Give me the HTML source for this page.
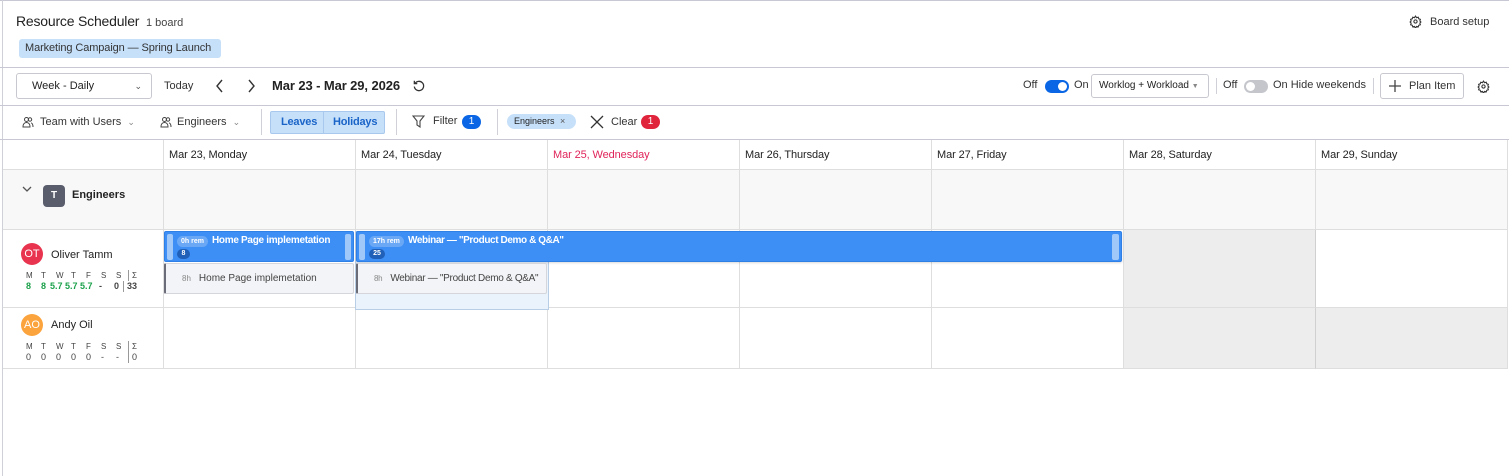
<!DOCTYPE html>
<html><head><meta charset="utf-8"><style>
*{box-sizing:border-box;margin:0;padding:0}
body{width:1509px;height:476px;overflow:hidden;background:#fff;font-family:"Liberation Sans",sans-serif;color:#222;font-size:12px;position:relative;white-space:nowrap}
.abs{position:absolute}
svg{display:block}
.cell{position:absolute;border-right:1px solid #dedede;border-bottom:1px solid #dedede}
.hd{font-size:11px;color:#222;padding:9px 0 0 5px;letter-spacing:-0.1px}
.sep{position:absolute;width:1px;background:#d0d0d8}
</style></head><body>
<div class="abs" style="left:0;top:0;width:1509px;height:1px;background:#c8c8d4"></div>
<div class="abs" style="left:2px;top:0;width:1px;height:476px;background:#d0d0d8"></div>
<div class="abs" style="left:16px;top:13px;font-size:14px;color:#222;letter-spacing:-0.2px">Resource Scheduler <span style="font-size:11px;color:#444;margin-left:3px;letter-spacing:0">1 board</span></div>
<div class="abs" style="left:19px;top:39px;height:19px;width:202px;background:#c6e0fa;border-radius:3px;font-size:11px;color:#333;line-height:19px;padding-left:6px;letter-spacing:-0.1px">Marketing Campaign — Spring Launch</div>
<div class="abs" style="left:1409px;top:15px;display:flex;align-items:center;font-size:11px;color:#333">
<svg width="13" height="13" viewBox="0 0 24 24" fill="none" stroke="#333" stroke-width="2"><circle cx="12" cy="12" r="3"/><path d="M12 2l2 3 3-1 1 3 3 1-1 3 2 2-2 2 1 3-3 1-1 3-3-1-2 3-2-3-3 1-1-3-3-1 1-3-2-2 2-2-1-3 3-1 1-3 3 1z"/></svg><span style="margin-left:8px">Board setup</span></div>
<div class="abs" style="left:0;top:67px;width:1509px;height:1px;background:#c8c8d4"></div>
<div class="abs" style="left:16px;top:73px;width:136px;height:26px;border:1px solid #c8c8d0;border-radius:3px;font-size:11px;line-height:24px;padding-left:15px">Week - Daily<span style="position:absolute;right:9px;top:0;font-size:9px;color:#555">⌄</span></div>
<div class="abs" style="left:164px;top:80px;font-size:11px;color:#333">Today</div>
<svg class="abs" style="left:215px;top:79px" width="10" height="14" viewBox="0 0 10 14"><path d="M7 1L2 7l5 6" fill="none" stroke="#333" stroke-width="1.4"/></svg>
<svg class="abs" style="left:246px;top:79px" width="10" height="14" viewBox="0 0 10 14"><path d="M3 1l5 6-5 6" fill="none" stroke="#333" stroke-width="1.4"/></svg>
<div class="abs" style="left:272px;top:78px;font-size:13px;font-weight:bold;color:#222;letter-spacing:-0.1px">Mar 23 - Mar 29, 2026</div>
<svg class="abs" style="left:412px;top:79px" width="14" height="14" viewBox="0 0 24 24" fill="none" stroke="#333" stroke-width="2.2"><path d="M5 8a8 8 0 1 1-1 5"/><path d="M4 3v5h5"/></svg>
<div class="abs" style="left:1023px;top:79px;font-size:11px;color:#333">Off</div>
<div class="abs" style="left:1045px;top:80px;width:24px;height:13px;border-radius:7px;background:#0a66e4"><div style="position:absolute;right:2px;top:2px;width:9px;height:9px;border-radius:50%;background:#fff"></div></div>
<div class="abs" style="left:1074px;top:79px;font-size:11px;color:#333">On</div>
<div class="abs" style="left:1091px;top:74px;width:118px;height:24px;border:1px solid #c8c8d0;border-radius:3px;font-size:10px;line-height:22px;padding-left:7px;color:#222">Worklog + Workload <span style="font-size:7px;color:#888">▼</span></div>
<div class="sep" style="left:1216px;top:78px;height:16px"></div>
<div class="abs" style="left:1223px;top:79px;font-size:11px;color:#333">Off</div>
<div class="abs" style="left:1244px;top:80px;width:24px;height:13px;border-radius:7px;background:#c4c6cc"><div style="position:absolute;left:2px;top:2px;width:9px;height:9px;border-radius:50%;background:#fff"></div></div>
<div class="abs" style="left:1273px;top:79px;font-size:11px;color:#333">On Hide weekends</div>
<div class="sep" style="left:1373px;top:78px;height:16px"></div>
<div class="abs" style="left:1380px;top:73px;width:84px;height:26px;border:1px solid #c8c8d0;border-radius:3px;font-size:11px;line-height:24px;padding-left:28px;color:#333">Plan Item<svg style="position:absolute;left:8px;top:6px" width="12" height="12" viewBox="0 0 12 12"><path d="M6 0v12M0 6h12" stroke="#444" stroke-width="1.3"/></svg></div>
<svg class="abs" style="left:1477px;top:80px" width="13" height="13" viewBox="0 0 24 24" fill="none" stroke="#333" stroke-width="2"><circle cx="12" cy="12" r="3"/><path d="M12 2l2 3 3-1 1 3 3 1-1 3 2 2-2 2 1 3-3 1-1 3-3-1-2 3-2-3-3 1-1-3-3-1 1-3-2-2 2-2-1-3 3-1 1-3 3 1z"/></svg>
<div class="abs" style="left:0;top:105px;width:1509px;height:1px;background:#c8c8d4"></div>
<svg class="abs" style="left:22px;top:116px" width="12" height="12" viewBox="0 0 12 12" fill="none" stroke="#444" stroke-width="1"><circle cx="4.5" cy="3.5" r="2"/><path d="M1 11c0-3 1.5-4.5 3.5-4.5S8 8 8 11z"/><circle cx="8" cy="3.5" r="1.7"/><path d="M9 6.8c1.3.4 2 1.8 2 4.2"/></svg>
<div class="abs" style="left:40px;top:116px;font-size:11px;color:#333">Team with Users <span style="color:#888;font-size:9px;margin-left:3px">⌄</span></div>
<svg class="abs" style="left:160px;top:116px" width="12" height="12" viewBox="0 0 12 12" fill="none" stroke="#444" stroke-width="1"><circle cx="4.5" cy="3.5" r="2"/><path d="M1 11c0-3 1.5-4.5 3.5-4.5S8 8 8 11z"/><circle cx="8" cy="3.5" r="1.7"/><path d="M9 6.8c1.3.4 2 1.8 2 4.2"/></svg>
<div class="abs" style="left:177px;top:116px;font-size:11px;color:#333">Engineers <span style="color:#888;font-size:9px;margin-left:3px">⌄</span></div>
<div class="sep" style="left:261px;top:109px;height:26px"></div>
<div class="abs" style="left:270px;top:111px;width:115px;height:23px;border:1px solid #a9c8ee;background:#c6e0fa;border-radius:2px;font-size:11px;font-weight:bold;color:#1a64c8;line-height:21px;letter-spacing:-0.2px"><span style="position:absolute;left:10px">Leaves</span><div style="position:absolute;left:52px;top:0;width:1px;height:21px;background:#a9c8ee"></div><span style="position:absolute;left:62px">Holidays</span></div>
<div class="sep" style="left:396px;top:109px;height:26px"></div>
<svg class="abs" style="left:412px;top:115px" width="13" height="13" viewBox="0 0 13 13"><path d="M1 1h11L8 6v6L5 10V6z" fill="none" stroke="#444" stroke-width="1.1"/></svg>
<div class="abs" style="left:433px;top:115px;font-size:11px;color:#333">Filter</div>
<div class="abs" style="left:462px;top:115px;width:19px;height:14px;border-radius:7px;background:#0a66e4;color:#fff;font-size:10px;text-align:center;line-height:14px">1</div>
<div class="sep" style="left:497px;top:109px;height:26px"></div>
<div class="abs" style="left:507px;top:114px;width:69px;height:15px;border-radius:8px;background:#c6e0fa;font-size:9px;color:#222;line-height:15px;padding-left:7px">Engineers <span style="margin-left:3px;color:#555">×</span></div>
<svg class="abs" style="left:590px;top:115px" width="14" height="14" viewBox="0 0 14 14"><path d="M1 1l12 12M13 1L1 13" stroke="#333" stroke-width="1.3"/></svg>
<div class="abs" style="left:611px;top:116px;font-size:11px;color:#333">Clear</div>
<div class="abs" style="left:641px;top:115px;width:19px;height:14px;border-radius:7px;background:#e0243c;color:#fff;font-size:10px;text-align:center;line-height:14px">1</div>
<div class="abs" style="left:0;top:139px;width:1509px;height:1px;background:#c8c8d4"></div>

<!-- grid -->
<div class="abs" style="left:3px;top:140px;width:1506px;height:229px">
 <div class="cell" style="left:0;top:0;width:161px;height:30px"></div>
 <div class="cell hd" style="left:161px;top:0;width:192px;height:30px">Mar 23, Monday</div>
 <div class="cell hd" style="left:353px;top:0;width:192px;height:30px">Mar 24, Tuesday</div>
 <div class="cell hd" style="left:545px;top:0;width:192px;height:30px;color:#e0245a">Mar 25, Wednesday</div>
 <div class="cell hd" style="left:737px;top:0;width:192px;height:30px">Mar 26, Thursday</div>
 <div class="cell hd" style="left:929px;top:0;width:192px;height:30px">Mar 27, Friday</div>
 <div class="cell hd" style="left:1121px;top:0;width:192px;height:30px">Mar 28, Saturday</div>
 <div class="cell hd" style="left:1313px;top:0;width:192px;height:30px">Mar 29, Sunday</div>
 <div class="cell" style="left:0;top:30px;width:161px;height:60px;background:#f8f8f8"></div>
 <div class="cell" style="left:161px;top:30px;width:192px;height:60px;background:#f8f8f8"></div>
 <div class="cell" style="left:353px;top:30px;width:192px;height:60px;background:#f8f8f8"></div>
 <div class="cell" style="left:545px;top:30px;width:192px;height:60px;background:#f8f8f8"></div>
 <div class="cell" style="left:737px;top:30px;width:192px;height:60px;background:#f8f8f8"></div>
 <div class="cell" style="left:929px;top:30px;width:192px;height:60px;background:#f8f8f8"></div>
 <div class="cell" style="left:1121px;top:30px;width:192px;height:60px;background:#f8f8f8"></div>
 <div class="cell" style="left:1313px;top:30px;width:192px;height:60px;background:#f8f8f8"></div>
 <div class="cell" style="left:0;top:90px;width:161px;height:78px"></div>
 <div class="cell" style="left:161px;top:90px;width:192px;height:78px"></div>
 <div class="cell" style="left:353px;top:90px;width:192px;height:78px"></div>
 <div class="cell" style="left:545px;top:90px;width:192px;height:78px"></div>
 <div class="cell" style="left:737px;top:90px;width:192px;height:78px"></div>
 <div class="cell" style="left:929px;top:90px;width:192px;height:78px"></div>
 <div class="cell" style="left:1121px;top:90px;width:192px;height:78px;background:#ededed;border-right-color:#d0d0d0"></div>
 <div class="cell" style="left:1313px;top:90px;width:192px;height:78px"></div>
 <div class="cell" style="left:0;top:168px;width:161px;height:61px"></div>
 <div class="cell" style="left:161px;top:168px;width:192px;height:61px"></div>
 <div class="cell" style="left:353px;top:168px;width:192px;height:61px"></div>
 <div class="cell" style="left:545px;top:168px;width:192px;height:61px"></div>
 <div class="cell" style="left:737px;top:168px;width:192px;height:61px"></div>
 <div class="cell" style="left:929px;top:168px;width:192px;height:61px"></div>
 <div class="cell" style="left:1121px;top:168px;width:192px;height:61px;background:#ededed;border-right-color:#d0d0d0"></div>
 <div class="cell" style="left:1313px;top:168px;width:192px;height:61px;background:#ededed"></div>
</div>

<svg class="abs" style="left:22px;top:186px" width="10" height="7" viewBox="0 0 10 7"><path d="M1 1l4 4 4-4" fill="none" stroke="#555" stroke-width="1.3"/></svg>
<div class="abs" style="left:43px;top:185px;width:22px;height:22px;border-radius:4px;background:#5a5d6c;color:#fff;font-size:10px;font-weight:bold;text-align:center;line-height:22px">T</div>
<div class="abs" style="left:72px;top:189px;font-size:11px;font-weight:bold;color:#222">Engineers</div>

<div class="abs" style="left:21px;top:243px;width:22px;height:22px;border-radius:50%;background:#e8344e;color:#fff;font-size:11px;text-align:center;line-height:22px">OT</div>
<div class="abs" style="left:51px;top:249px;font-size:11px;color:#222">Oliver Tamm</div>
<div class="abs" style="left:26px;top:270px;font-size:8px;color:#444;line-height:11px">
<div style="display:flex"><span style="width:15px">M</span><span style="width:15px">T</span><span style="width:15px">W</span><span style="width:15px">T</span><span style="width:15px">F</span><span style="width:15px">S</span><span style="width:12px">S</span><span style="border-left:1px solid #999;padding-left:3px">Σ</span></div>
<div style="display:flex;font-weight:bold;font-size:9px"><span style="width:15px;color:#1aa04a">8</span><span style="width:9px;color:#1aa04a">8</span><span style="width:15px;color:#1aa04a">5.7</span><span style="width:15px;color:#1aa04a">5.7</span><span style="width:19px;color:#1aa04a">5.7</span><span style="width:15px;color:#444">-</span><span style="width:9px;color:#444">0</span><span style="border-left:1px solid #999;padding-left:3px;color:#444">33</span></div></div>

<div class="abs" style="left:21px;top:314px;width:22px;height:22px;border-radius:50%;background:#fba33c;color:#fff;font-size:11px;text-align:center;line-height:22px">AO</div>
<div class="abs" style="left:51px;top:319px;font-size:11px;color:#222">Andy Oil</div>
<div class="abs" style="left:26px;top:341px;font-size:8px;color:#444;line-height:11px">
<div style="display:flex"><span style="width:15px">M</span><span style="width:15px">T</span><span style="width:15px">W</span><span style="width:15px">T</span><span style="width:15px">F</span><span style="width:15px">S</span><span style="width:12px">S</span><span style="border-left:1px solid #999;padding-left:3px">Σ</span></div>
<div style="display:flex;font-size:9px"><span style="width:15px">0</span><span style="width:15px">0</span><span style="width:15px">0</span><span style="width:15px">0</span><span style="width:15px">0</span><span style="width:15px">-</span><span style="width:12px">-</span><span style="border-left:1px solid #999;padding-left:3px">0</span></div></div>

<div class="abs" style="left:355px;top:231px;width:194px;height:79px;background:#eaf2fc;border:1px solid #b8cde6"></div>

<div class="abs" style="left:164px;top:231px;width:190px;height:31px;background:#3d8ff5;border:1px solid #2e7fe6;border-radius:2px">
 <div style="position:absolute;left:2px;top:2px;width:6px;height:26px;background:#a0c8f8;border-radius:2px"></div>
 <div style="position:absolute;right:2px;top:2px;width:6px;height:26px;background:#a0c8f8;border-radius:2px"></div>
 <div style="position:absolute;left:12px;top:4px;height:11px;padding:0 4px;border-radius:6px;background:#6aa8f5;color:#fff;font-size:7px;font-weight:bold;line-height:11px">0h rem</div>
 <div style="position:absolute;left:47px;top:3px;color:#fff;font-size:10px;font-weight:bold;letter-spacing:-0.3px">Home Page implemetation</div>
 <div style="position:absolute;left:12px;top:17px;width:13px;height:10px;border-radius:5px;background:#2060b8;color:#fff;font-size:7px;font-weight:bold;text-align:center;line-height:10px">8</div>
</div>
<div class="abs" style="left:356px;top:231px;width:766px;height:31px;background:#3d8ff5;border:1px solid #2e7fe6;border-radius:2px;box-shadow:0 1px 2px rgba(0,0,0,.15)">
 <div style="position:absolute;left:2px;top:2px;width:6px;height:26px;background:#a0c8f8;border-radius:2px"></div>
 <div style="position:absolute;right:2px;top:2px;width:7px;height:26px;background:#a0c8f8;border-radius:2px"></div>
 <div style="position:absolute;left:12px;top:4px;height:11px;padding:0 4px;border-radius:6px;background:#6aa8f5;color:#fff;font-size:7px;font-weight:bold;line-height:11px">17h rem</div>
 <div style="position:absolute;left:51px;top:3px;color:#fff;font-size:10px;font-weight:bold;letter-spacing:-0.4px">Webinar — "Product Demo &amp; Q&amp;A"</div>
 <div style="position:absolute;left:12px;top:17px;width:16px;height:10px;border-radius:5px;background:#2060b8;color:#fff;font-size:7px;font-weight:bold;text-align:center;line-height:10px">25</div>
</div>
<div class="abs" style="left:164px;top:263px;width:190px;height:31px;background:#f3f4f7;border:1px solid #d4d6dc;border-left:2px solid #6a6c78;border-radius:2px;font-size:10px;color:#444;line-height:29px;overflow:hidden"><span style="font-size:8px;color:#888;margin-left:16px">8h</span><span style="margin-left:8px">Home Page implemetation</span></div>
<div class="abs" style="left:356px;top:263px;width:191px;height:31px;background:#f3f4f7;border:1px solid #d4d6dc;border-left:2px solid #6a6c78;border-radius:2px;font-size:10px;color:#444;line-height:29px;overflow:hidden;letter-spacing:-0.3px"><span style="font-size:8px;color:#888;margin-left:16px">8h</span><span style="margin-left:8px">Webinar — "Product Demo &amp; Q&amp;A"</span></div>
</body></html>
